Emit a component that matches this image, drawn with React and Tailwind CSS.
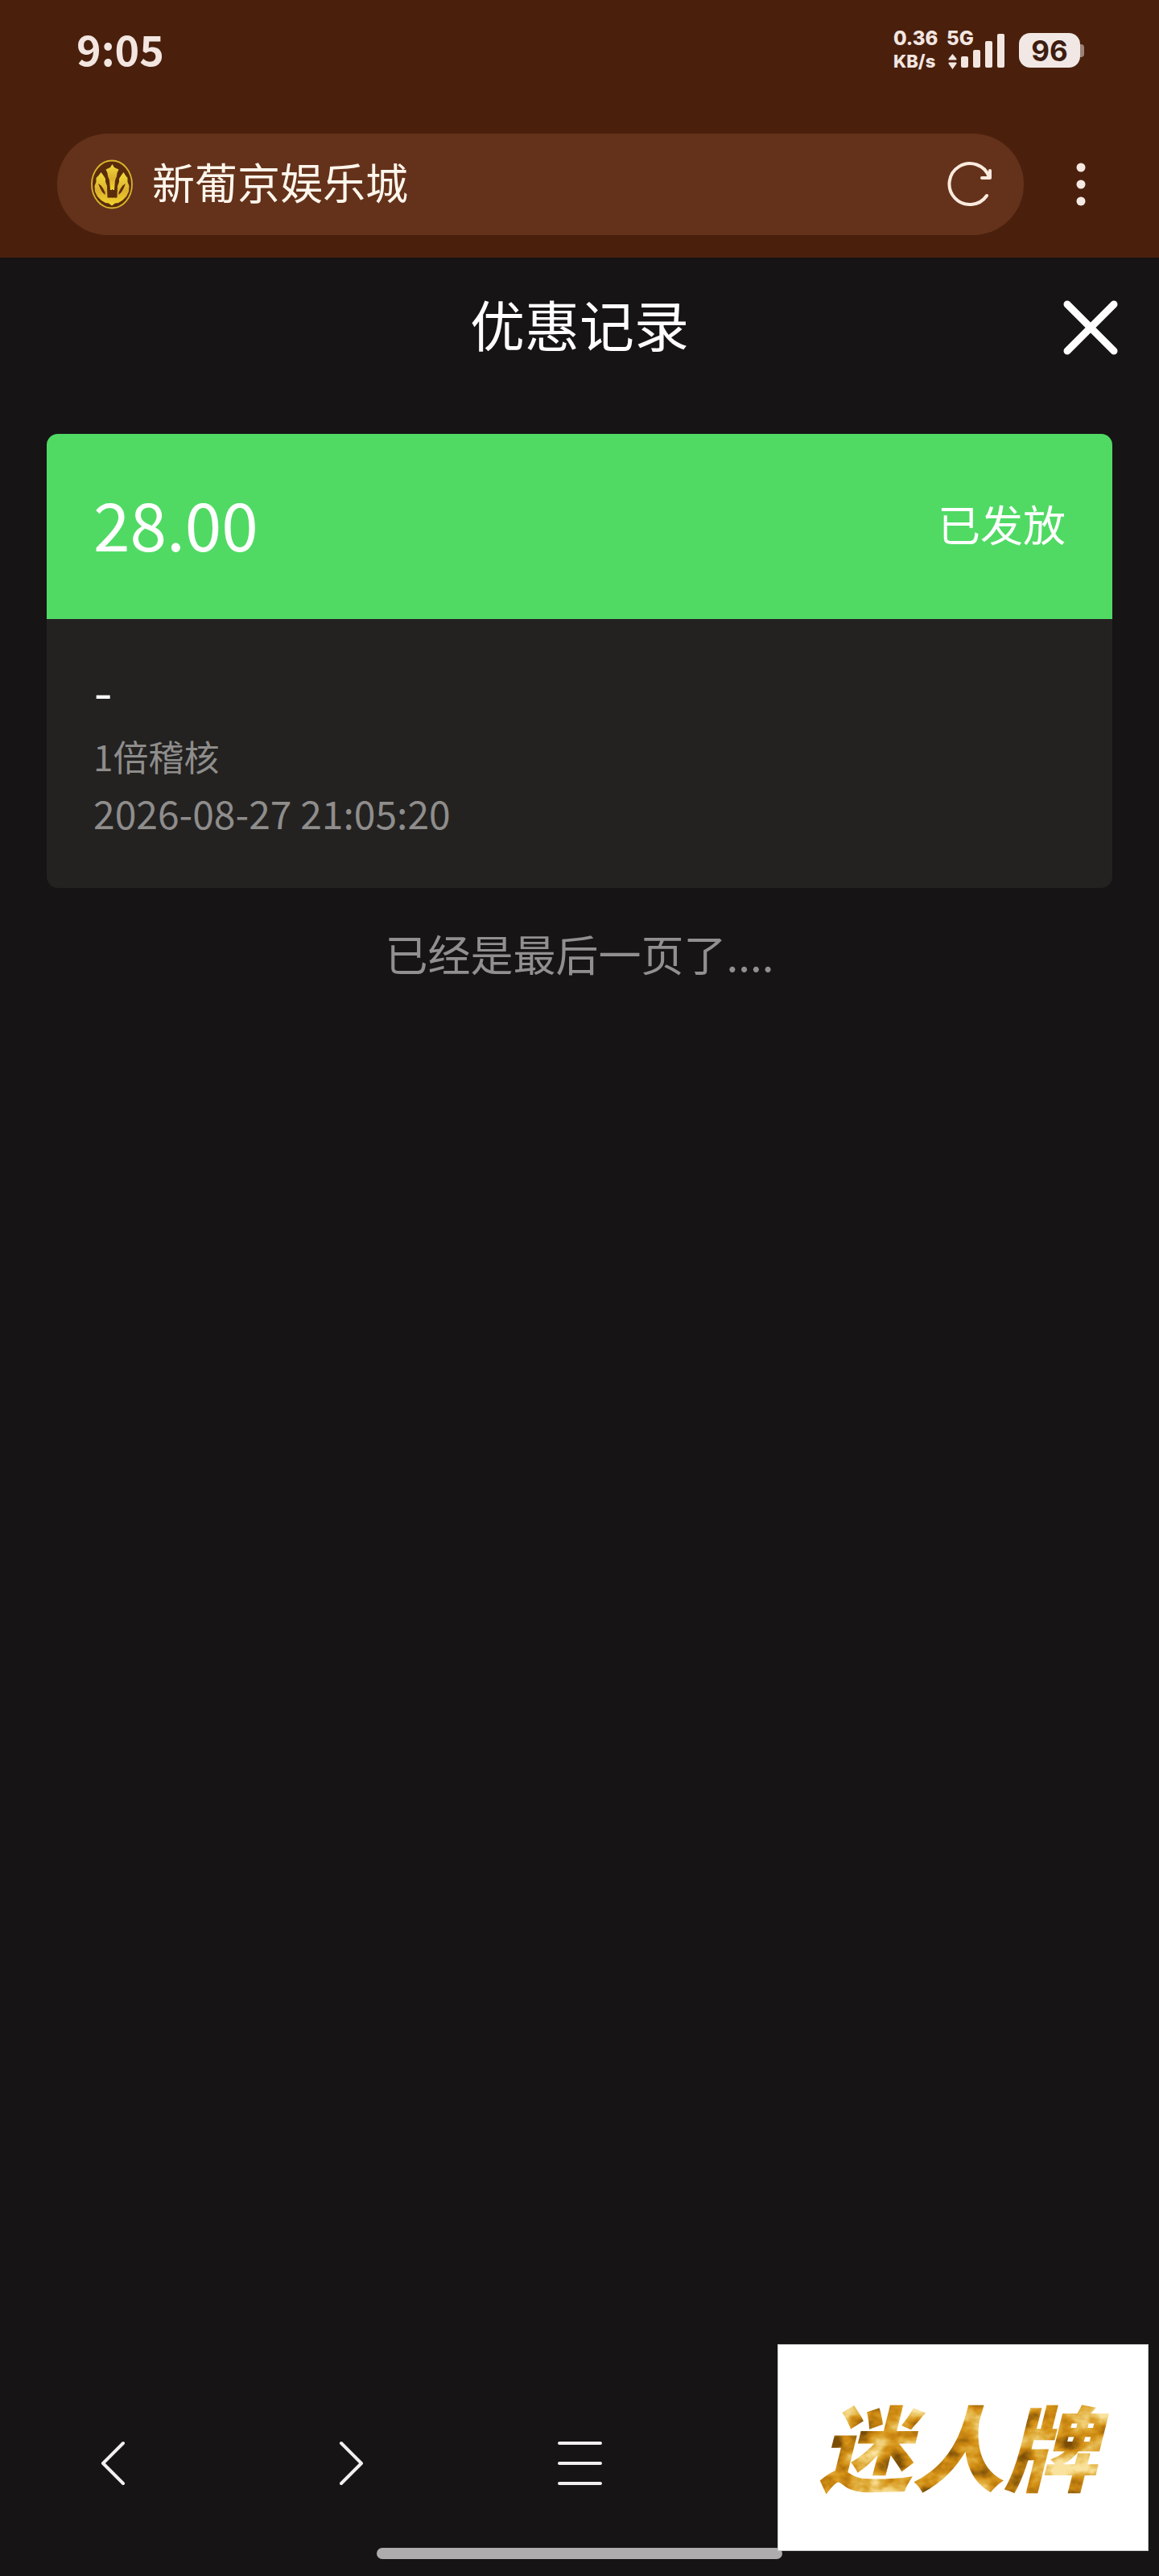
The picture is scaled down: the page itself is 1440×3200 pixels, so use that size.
import React from "react";

function StatusBar() {
  return (
    <div className="flex h-[94px] items-start justify-between pl-[95px] pr-[93px] pt-[30px] text-[#f3e6e1]">
      <time className="text-[52px] leading-[60px] font-bold">9:05</time>
      <div className="flex items-start pt-1 font-[Inter,sans-serif]">
        <div className="w-[66px] font-extrabold">
          <div className="text-[24px] leading-[28px]">0.36</div>
          <div className="text-[22px] leading-[28px]">KB/s</div>
        </div>
        <div className="w-[74px] text-[24px] leading-[28px] font-extrabold">5G</div>
        <div className="ml-4 mt-[7px] flex items-center">
          <span className="flex h-[43px] w-[76px] items-center justify-center rounded-[14px] bg-[#f1e8e5] text-[35px] leading-[40px] font-bold text-[#3e1d10]">
            96
          </span>
          <span className="h-4 w-[5px] rounded-r-[4px] bg-[#9c8379]" />
        </div>
      </div>
      <svg className="absolute top-[40px] right-[190px]" width="74" height="46" viewBox="0 0 74 46" fill="#f3e6e1" aria-hidden="true">
        <path d="M7.500 27 12.500 33Q13 34.500 11.500 34.500H3.500Q2 34.500 2.500 33Z M7.500 46 2.500 39Q2 37.500 3.500 37.500H11.500Q13 37.500 12.500 39Z" />
        <rect x="18" y="30" width="9" height="14" rx="2" />
        <rect x="33" y="22" width="9" height="22" rx="2" />
        <rect x="48" y="11" width="9" height="33" rx="2" />
        <rect x="63" y="2" width="9" height="42" rx="2" />
      </svg>
    </div>
  );
}

function SiteLogo() {
  return (
    <svg className="shrink-0" width="52" height="62" viewBox="0 0 52 62" aria-hidden="true">
      <defs>
        <linearGradient id="gold" x1="0" y1="0" x2="0" y2="1">
          <stop offset="0" stopColor="#f0dc3c" />
          <stop offset="0.55" stopColor="#dcb02c" />
          <stop offset="1" stopColor="#f4d42c" />
        </linearGradient>
      </defs>
      <ellipse cx="26" cy="31" rx="25" ry="29.500" fill="#5a2c0c" stroke="#d9b52c" strokeWidth="1.800" />
      <path
        fill="url(#gold)"
        d="M12.500 16 15.500 20 18 24 18 28 20 33 20.500 47.500H32.500L33 33 35 28 35 24 37.500 20 40.500 16 43 20 45.500 23 45.500 28 47.500 33 47 40 44 46 39 51 34 54 30 54.500 26 57.500 22 54.500 18 54 13 51 8 46 5 40 4.500 33 6.500 28 6.500 23 9.500 20Z"
      />
      <path fill="#5a2c0c" d="M9 30 12.500 32.500 15 36 17.500 41 17.500 44 14 40.500 11.500 36Z M43 30 39.500 32.500 37 36 34.500 41 34.500 44 38 40.500 40.500 36Z" />
      <path fill="#5a2c0c" d="M21 31H32V36L31 47.500H29.500V37H23.500V47.500H22Z" />
      <path
        fill="url(#gold)"
        d="M26.500 6 29 10 34.500 12.500 32.500 17 32 21 30 26 29 38H24L23 26 21 21 20.500 17 18.500 12.500 24 10Z"
      />
      <path fill="#5a2c0c" d="M26 37H27V47.500H26Z" />
    </svg>
  );
}

function AddressBar() {
  return (
    <div className="mt-[72px] flex items-center pl-[71px] pr-[62px]">
      <div className="flex h-[126px] flex-1 items-center rounded-full bg-[#64321b] pl-[42px] pr-8">
        <SiteLogo />
        <span className="ml-6 flex-1 pb-2 text-[53px] leading-[64px] text-[#fff6ec]">新葡京娱乐城</span>
        <button type="button" aria-label="刷新" className="flex size-[70px] items-center justify-center">
          <svg width="60" height="60" viewBox="0 0 60 60" fill="none" stroke="#fbeade" strokeWidth="4" strokeLinecap="round" strokeLinejoin="round">
            <path d="M51 44A25.500 25.500 0 1 1 54 21" />
            <path d="M45 22H55V13" />
          </svg>
        </button>
      </div>
      <button type="button" aria-label="更多" className="ml-9 flex h-20 w-[70px] items-center justify-center">
        <svg width="12" height="56" viewBox="0 0 12 56" fill="#f6e9e4">
          <circle cx="6" cy="7" r="5.500" />
          <circle cx="6" cy="28" r="5.500" />
          <circle cx="6" cy="49" r="5.500" />
        </svg>
      </button>
    </div>
  );
}

function RecordCard() {
  return (
    <article className="mx-[58px] overflow-hidden rounded-[14px] bg-[#232221]">
      <div className="flex h-[230px] items-center justify-between bg-[#50da64] px-[58px] pb-2 text-white">
        <span className="text-[82px] leading-[96px]">28.00</span>
        <span className="text-[53px] leading-[64px]">已发放</span>
      </div>
      <div className="px-[58px] pt-[54px] pb-[60px] text-[#8f8d8c]">
        <p className="font-[Inter,sans-serif] text-[53px] leading-[80px] text-white">-</p>
        <p className="text-[44px] leading-[72px]">1倍稽核</p>
        <p className="text-[48px] leading-[68px]">2026-08-27 21:05:20</p>
      </div>
    </article>
  );
}

function BottomNav() {
  return (
    <nav className="grid grid-cols-5 justify-items-center">
      <button type="button" aria-label="后退">
        <svg width="80" height="80" viewBox="0 0 80 80" fill="none" stroke="#f2eff0" strokeWidth="4" strokeLinecap="round" strokeLinejoin="round">
          <path d="M49 15 24 40 49 65" />
        </svg>
      </button>
      <button type="button" aria-label="前进">
        <svg width="80" height="80" viewBox="0 0 80 80" fill="none" stroke="#f2eff0" strokeWidth="4" strokeLinecap="round" strokeLinejoin="round">
          <path d="M32 15 57 40 32 65" />
        </svg>
      </button>
      <button type="button" aria-label="菜单">
        <svg width="80" height="80" viewBox="0 0 80 80" fill="none" stroke="#f2eff0" strokeWidth="4" strokeLinecap="round">
          <path d="M15 15H66M15 40H66M15 65H66" />
        </svg>
      </button>
    </nav>
  );
}

function BrandBanner() {
  return (
    <aside className="absolute right-[13px] bottom-[31px] flex h-[257px] w-[461px] items-center justify-center border border-[#c9c9c9] bg-white">
      <svg width="459" height="255" viewBox="0 0 459 255">
        <defs>
          <filter id="foil" x="0" y="0" width="1" height="1" colorInterpolationFilters="sRGB">
            <feTurbulence type="fractalNoise" baseFrequency="0.022 0.03" numOctaves="4" seed="8" result="noise" />
            <feColorMatrix in="noise" type="matrix" values="2 0 0 0 -0.5  2 0 0 0 -0.5  2 0 0 0 -0.5  0 0 0 0 1" />
            <feComponentTransfer result="gold">
              <feFuncR type="table" tableValues="0.48 0.62 0.76 0.84 0.88 0.94 0.98" />
              <feFuncG type="table" tableValues="0.3 0.41 0.5 0.58 0.68 0.8 0.89" />
              <feFuncB type="table" tableValues="0.02 0.05 0.06 0.1 0.24 0.44 0.62" />
            </feComponentTransfer>
            <feComposite in="gold" in2="SourceAlpha" operator="in" />
          </filter>
        </defs>
        <text x="223" y="173" textAnchor="middle" filter="url(#foil)" className="fill-[#c98f1c] text-[115px] font-black italic">
          迷人牌
        </text>
      </svg>
    </aside>
  );
}

export default function App() {
  return (
    <div className="relative flex min-h-screen flex-col bg-[#161415] font-['Noto_Sans_CJK_SC',sans-serif]">
      <header className="bg-[#4a200d] pb-7">
        <StatusBar />
        <AddressBar />
      </header>

      <main className="flex flex-1 flex-col">
        <div className="grid h-[172px] grid-cols-[1fr_auto_1fr] items-center text-white">
          <h1 className="col-start-2 pb-2 text-[68px] leading-[80px]">优惠记录</h1>
          <button type="button" aria-label="关闭" className="mr-[45px] justify-self-end">
            <svg width="80" height="80" viewBox="0 0 80 80" fill="none" stroke="currentColor" strokeWidth="9" strokeLinecap="round">
              <path d="M11 12 69 70M69 12 11 70" />
            </svg>
          </button>
        </div>
        <div className="mt-[47px]">
          <RecordCard />
        </div>
        <p className="mt-[49px] text-center text-[53px] leading-[64px] text-[#918f90]">已经是最后一页了....</p>
      </main>

      <footer className="flex flex-col items-center pb-[21px]">
        <div className="w-full pb-[65px]">
          <BottomNav />
        </div>
        <div className="h-[14px] w-[35%] rounded-[7px] bg-[#aeacad]" />
      </footer>

      <BrandBanner />
    </div>
  );
}
